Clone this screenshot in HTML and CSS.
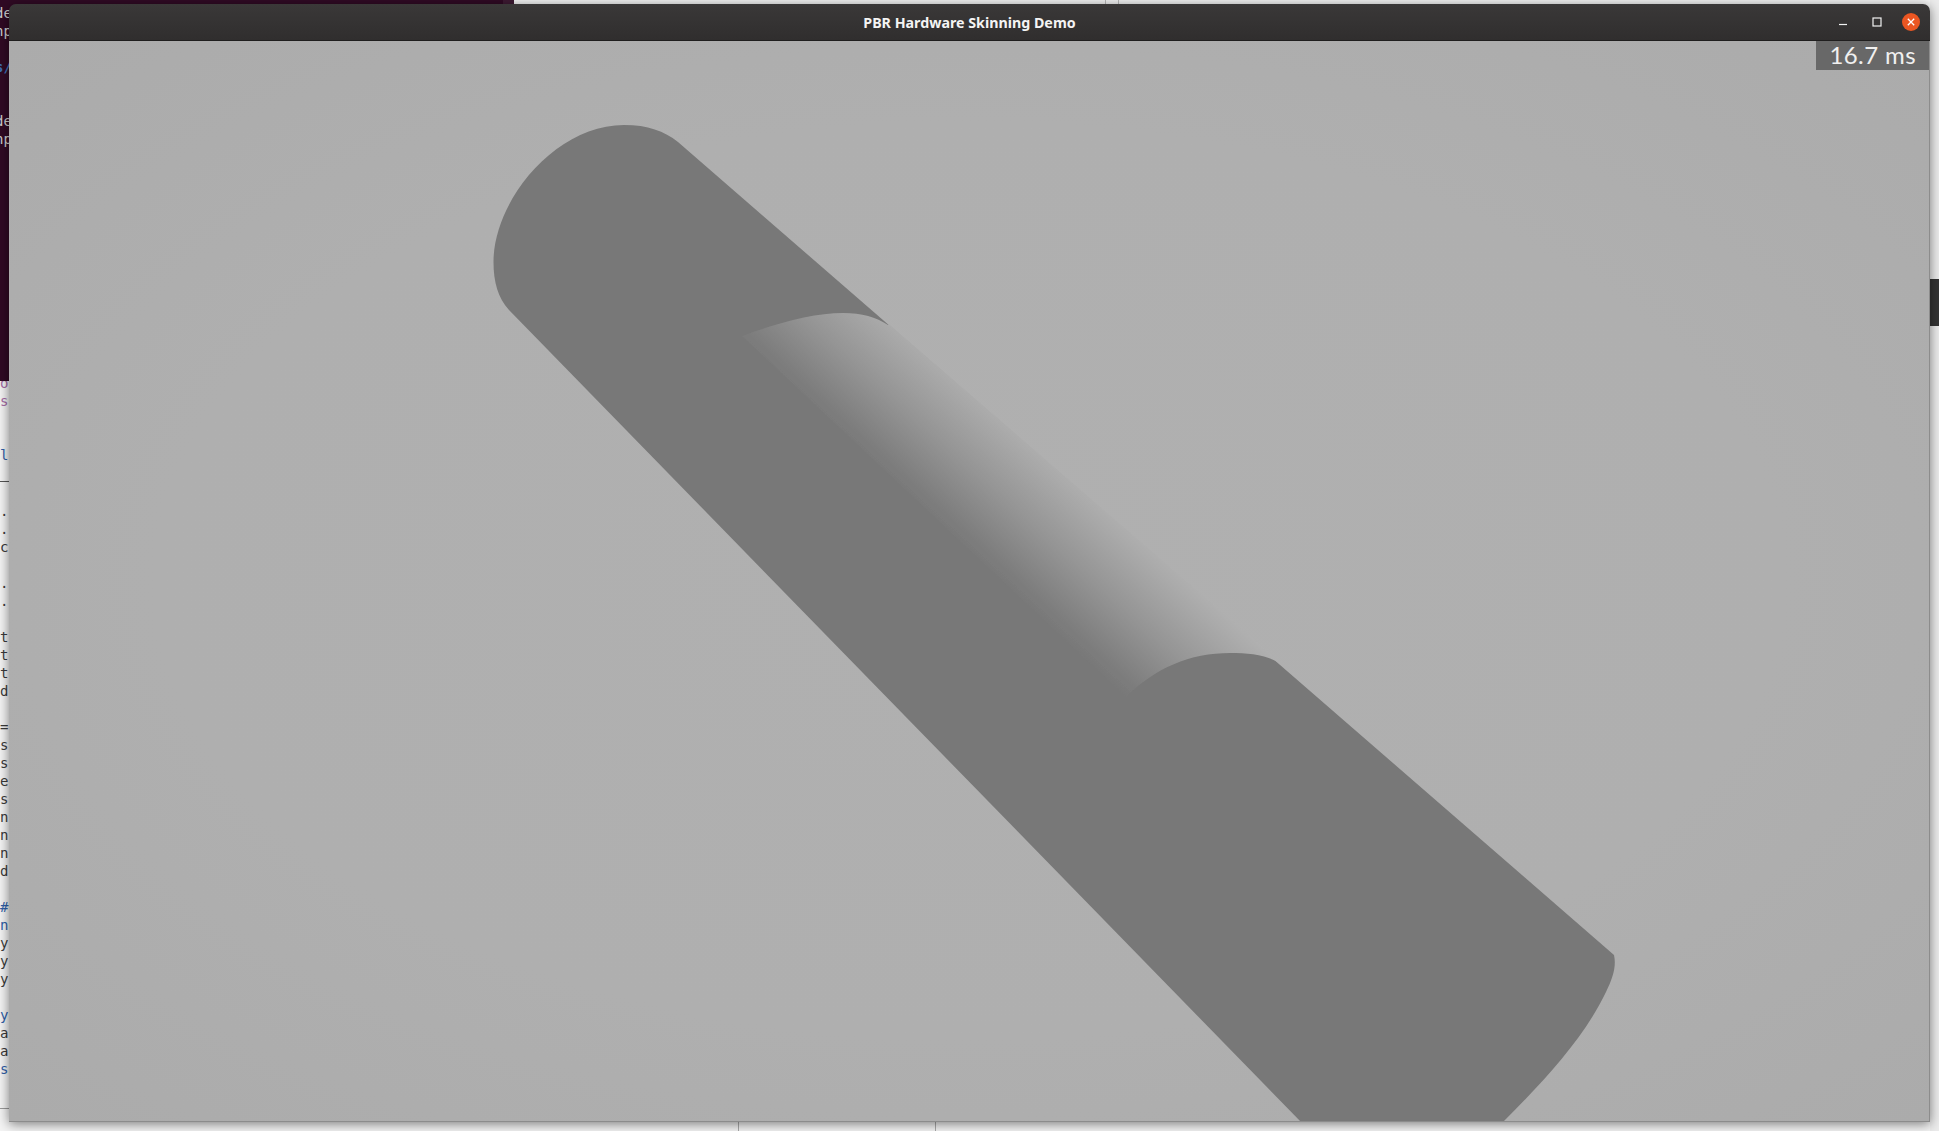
FILE: index.html
```html
<!DOCTYPE html>
<html lang="en">
<head>
  <meta charset="UTF-8" />
  <title>PBR Hardware Skinning Demo</title>
  <link rel="stylesheet" href="styles.css">
</head>
<body>
  <div class="desktop">
    <div class="editor">
      <div class="editor-top">
        <div class="line purple">o</div>
        <div class="line purple">s</div>
        <div class="line"></div>
        <div class="line"></div>
        <div class="line blue">l</div>
      </div>
      <div class="editor-body">
        <div class="line">.</div>
        <div class="line">.</div>
        <div class="line">c</div>
        <div class="line"></div>
        <div class="line">.</div>
        <div class="line">.</div>
        <div class="line"></div>
        <div class="line">t</div>
        <div class="line">t</div>
        <div class="line">t</div>
        <div class="line">d</div>
        <div class="line"></div>
        <div class="line">=</div>
        <div class="line">s</div>
        <div class="line">s</div>
        <div class="line">e</div>
        <div class="line">s</div>
        <div class="line">n</div>
        <div class="line">n</div>
        <div class="line">n</div>
        <div class="line">d</div>
        <div class="line"></div>
        <div class="line blue">#</div>
        <div class="line blue">n</div>
        <div class="line">y</div>
        <div class="line">y</div>
        <div class="line">y</div>
        <div class="line"></div>
        <div class="line blue">y</div>
        <div class="line">a</div>
        <div class="line">a</div>
        <div class="line blue">s</div>
      </div>
    </div>

    <div class="terminal">
      <div class="line">de</div>
      <div class="line">np</div>
      <div class="line"></div>
      <div class="line path">s/</div>
      <div class="line"></div>
      <div class="line"></div>
      <div class="line">de</div>
      <div class="line">np</div>
    </div>

    <div class="side-strip"><span class="side-thumb"></span></div>
    <span class="top-divider top-divider-a"></span>
    <span class="top-divider top-divider-b"></span>
    <span class="bottom-divider bottom-divider-a"></span>
    <span class="bottom-divider bottom-divider-b"></span>

    <div class="window">
      <header class="titlebar">
        <h1 class="title">PBR Hardware Skinning Demo</h1>
        <div class="controls">
          <svg class="ctl" width="18" height="18" viewBox="0 0 18 18"><path d="M5 11.5h8" stroke="#f2f2f2" stroke-width="1.2"/></svg>
          <svg class="ctl" width="18" height="18" viewBox="0 0 18 18"><rect x="5" y="5" width="8" height="8" fill="none" stroke="#f2f2f2" stroke-width="1.2"/></svg>
          <svg class="ctl" width="18" height="18" viewBox="0 0 18 18"><circle cx="9" cy="9" r="9" fill="#eb5622"/><path d="M5.8 5.8l6.4 6.4M12.2 5.8l-6.4 6.4" stroke="#fff" stroke-width="1.3"/></svg>
        </div>
      </header>
      <div class="viewport">
        <svg class="scene" width="1921" height="1081" viewBox="9 41 1921 1081">
          <defs>
            <linearGradient id="bendShade" gradientUnits="userSpaceOnUse" x1="904" y1="495" x2="992" y2="399">
              <stop offset="0" stop-color="#787878"/>
              <stop offset="0.1" stop-color="#7c7c7c"/>
              <stop offset="0.5" stop-color="#959595"/>
              <stop offset="0.9" stop-color="#ababab"/>
              <stop offset="1" stop-color="#b0b0b0"/>
            </linearGradient>
            <filter id="soft" x="-5%" y="-5%" width="110%" height="110%">
              <feGaussianBlur stdDeviation="0.7"/>
            </filter>
          </defs>
          <path fill="#787878" d="M509 310C498 298 493.5 282 493.5 262C493.5 200 556 125 624 125C648 125 664 131 678 142L1614 955C1616.5 966 1613 978 1606 992C1584 1038 1545 1080 1503 1122L1301 1122Z"/>
          <path fill="url(#bendShade)" filter="url(#soft)" d="M742 336C780 322 815 313 843 313C862 313 876 317 888 325L889 324.3L1279 661.3L1278 662C1262 654 1248 653 1230 653C1190 653 1155 668 1126 697Z"/>
        </svg>
        <div class="frame-time">16.7 ms</div>
      </div>
    </div>
  </div>
</body>
</html>
```

FILE: styles.css
```css
* {
  box-sizing: border-box;
}

body {
  margin: 0;
  background: #f4f4f4;
  overflow: hidden;
}

.desktop {
  position: relative;
  width: 1939px;
  height: 1131px;
  overflow: hidden;
  background: #f4f4f4;
}

.line {
  height: 18px;
  line-height: 18px;
  font-family: "DejaVu Sans Mono", monospace;
  font-size: 14px;
  color: #3a3a3a;
  white-space: nowrap;
}

.purple { color: #a66ca6; }
.blue { color: #2f5fa8; }

/* windows behind the demo */
.terminal {
  position: absolute;
  left: 0;
  top: 0;
  width: 514px;
  height: 381px;
  padding-top: 4px;
  background: #300a24;
  box-shadow: inset -11px 0 0 #3e1a33;
}

.terminal .line {
  color: #cfcfcf;
  text-indent: -5px;
}

.terminal .path {
  color: #3d6fb4;
  font-weight: bold;
}

.editor {
  position: absolute;
  left: 0;
  top: 374px;
  width: 600px;
  height: 735px;
  border-bottom: 1px solid #9a9a9a;
}

.editor-top {
  height: 108px;
  border-bottom: 1px solid #555;
}

.editor-body {
  padding-top: 20px;
}

.side-strip {
  position: absolute;
  right: 0;
  top: 0;
  bottom: 0;
  width: 9px;
  background: #ececec;
}

.side-thumb {
  display: block;
  margin-top: 279px;
  height: 47px;
  background: #333;
}

.top-divider {
  position: absolute;
  top: 0;
  height: 4px;
  width: 1px;
  background: #bbb;
}
.top-divider-a { left: 1105px; }
.top-divider-b { left: 1118px; }

.bottom-divider {
  position: absolute;
  top: 1122px;
  bottom: 0;
  width: 1px;
  background: #aaa;
}
.bottom-divider-a { left: 738px; }
.bottom-divider-b { left: 935px; }

/* demo window */
.window {
  position: absolute;
  left: 9px;
  top: 4px;
  width: 1921px;
  height: 1118px;
  display: flex;
  flex-direction: column;
  border-radius: 7px 7px 0 0;
  box-shadow: 0 2px 12px rgba(0, 0, 0, 0.5);
}

.titlebar {
  position: relative;
  flex: none;
  height: 37px;
  display: flex;
  justify-content: center;
  align-items: center;
  background: linear-gradient(#3a3838, #302e2e);
  border-bottom: 1px solid #1f1e1e;
  border-radius: 7px 7px 0 0;
}

.title {
  margin: 0;
  font-family: "Noto Sans", sans-serif;
  font-size: 14.25px;
  font-weight: 700;
  color: #f4f4f4;
}

.controls {
  position: absolute;
  right: 10px;
  top: 9px;
  display: flex;
  gap: 16px;
}

.ctl {
  display: block;
}

.viewport {
  position: relative;
  flex: 1;
  background: radial-gradient(ellipse at 50% 50%, #b0b0b0, #afafaf 60%, #ababab);
  border-right: 1px solid #8c8c8c;
  border-bottom: 1px solid #8c8c8c;
  overflow: hidden;
}

.scene {
  display: block;
}

.frame-time {
  position: absolute;
  right: 0;
  top: 0;
  width: 113px;
  height: 29px;
  padding-right: 13px;
  text-align: right;
  line-height: 28px;
  font-family: Lato, sans-serif;
  font-size: 24px;
  letter-spacing: 0.4px;
  color: #f0f0f0;
  background: #686868;
}
```
